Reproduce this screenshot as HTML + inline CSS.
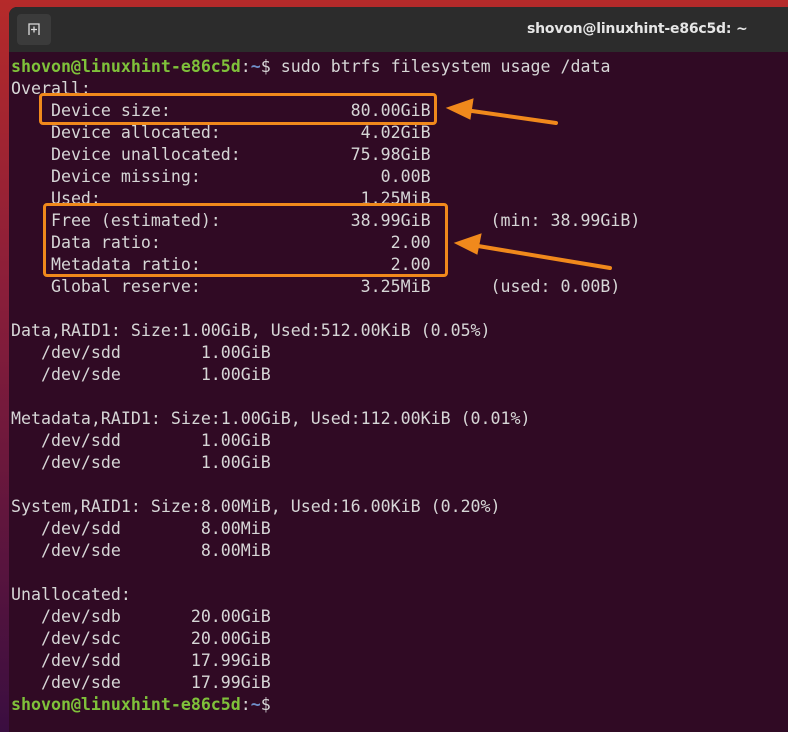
<!DOCTYPE html>
<html><head><meta charset="utf-8"><style>
html,body{margin:0;padding:0;width:788px;height:732px;overflow:hidden;}
body{background:linear-gradient(180deg,#b52a2a 0%,#8a1e3a 40%,#3a0e40 100%);position:relative;}
.win{position:absolute;left:9px;top:7px;width:800px;height:740px;background:#300a24;border-radius:8px 0 0 0;overflow:hidden;}
.tb{position:absolute;left:0;top:0;right:0;height:45px;background:#2c2c2c;}
.nt{position:absolute;left:8px;top:7px;width:34px;height:31px;background:#3b3b3b;border-radius:4px;}
.title{position:absolute;left:518px;top:14px;font:bold 14px "DejaVu Sans","Liberation Sans",sans-serif;color:#e6e6e6;letter-spacing:-0.2px;}
pre{position:absolute;left:2px;top:49px;margin:0;font-family:"DejaVu Sans Mono","Liberation Mono",monospace;font-size:16.6px;line-height:22px;color:#d6d6d6;}
.g{color:#7fc13a;font-weight:bold}.b{color:#6f8fc9;font-weight:bold}
.box{position:absolute;border:3px solid #f0891c;border-radius:4px;}
</style></head><body>
<div class="win">
<div class="tb"><div class="nt"><svg width="34" height="31" viewBox="0 0 34 31"><path d="M12 21V10h10v11" fill="none" stroke="#ddd" stroke-width="1.3"/><path d="M17 12.5v6M14 15.5h6" stroke="#ddd" stroke-width="1.3"/></svg></div>
<div class="title">shovon@linuxhint-e86c5d: ~</div></div>
<pre><span class="g">shovon@linuxhint-e86c5d</span>:<span class="b">~</span>$ sudo btrfs filesystem usage /data
Overall:
    Device size:                  80.00GiB
    Device allocated:              4.02GiB
    Device unallocated:           75.98GiB
    Device missing:                  0.00B
    Used:                          1.25MiB
    Free (estimated):             38.99GiB      (min: 38.99GiB)
    Data ratio:                       2.00
    Metadata ratio:                   2.00
    Global reserve:                3.25MiB      (used: 0.00B)

Data,RAID1: Size:1.00GiB, Used:512.00KiB (0.05%)
   /dev/sdd        1.00GiB
   /dev/sde        1.00GiB

Metadata,RAID1: Size:1.00GiB, Used:112.00KiB (0.01%)
   /dev/sdd        1.00GiB
   /dev/sde        1.00GiB

System,RAID1: Size:8.00MiB, Used:16.00KiB (0.20%)
   /dev/sdd        8.00MiB
   /dev/sde        8.00MiB

Unallocated:
   /dev/sdb       20.00GiB
   /dev/sdc       20.00GiB
   /dev/sdd       17.99GiB
   /dev/sde       17.99GiB
<span class="g">shovon@linuxhint-e86c5d</span>:<span class="b">~</span>$</pre>
</div>
<div class="box" style="left:39px;top:93px;width:392px;height:26px"></div>
<div class="box" style="left:43px;top:203px;width:399px;height:68px"></div>
<svg style="position:absolute;left:0;top:0" width="788" height="732">
<g stroke="#f0891c" stroke-width="4" fill="#f0891c" stroke-linecap="round">
<line x1="556" y1="123" x2="465" y2="110"/>
<polygon points="447,108 473,99 470,119" stroke-width="1"/>
<line x1="610" y1="268" x2="472" y2="245"/>
<polygon points="455,243 481,234 477,254" stroke-width="1"/>
</g></svg>
</body></html>
